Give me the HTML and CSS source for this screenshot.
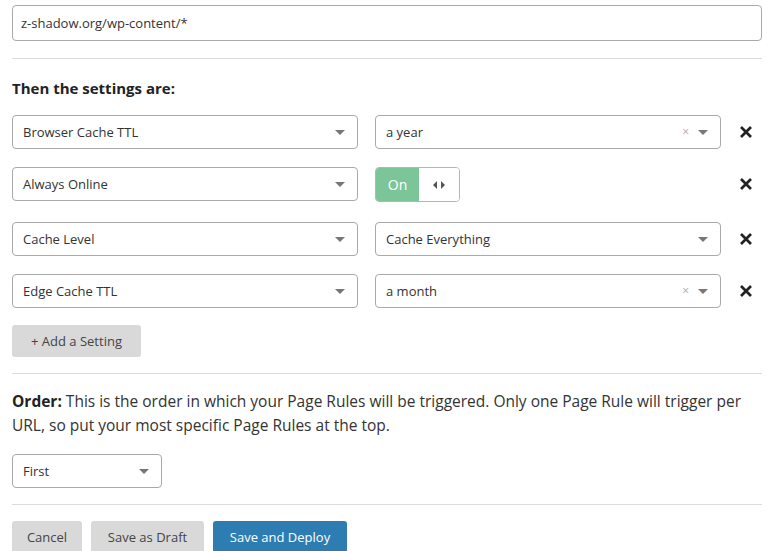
FILE: index.html
```html
<!DOCTYPE html>
<html>
<head>
<meta charset="utf-8">
<link rel="stylesheet" href="styles.css">
</head>
<body>
<div class="page">
  <div class="url-input">z-shadow.org/wp-content/*</div>
  <hr class="rule rule-top">
  <h3 class="heading">Then the settings are:</h3>

  <div class="settings">
    <div class="row">
      <div class="select"><span>Browser Cache TTL</span><span class="caret"></span></div>
      <div class="select"><span>a year</span><span class="controls"><span class="clear">×</span><span class="caret"></span></span></div>
      <span class="remove"><svg width="14" height="14" viewBox="0 0 14 14"><path d="M2 2L12 12M12 2L2 12" stroke="#222" stroke-width="2.7"/></svg></span>
    </div>
    <div class="row row-toggle">
      <div class="select"><span>Always Online</span><span class="caret"></span></div>
      <div class="value-cell">
        <div class="toggle"><span class="toggle-on">On</span><span class="toggle-handle"><svg width="12" height="8" viewBox="0 0 12 8"><path d="M4 0L0 4L4 8Z M8 0L12 4L8 8Z" fill="#555"/></svg></span></div>
      </div>
      <span class="remove"><svg width="14" height="14" viewBox="0 0 14 14"><path d="M2 2L12 12M12 2L2 12" stroke="#222" stroke-width="2.7"/></svg></span>
    </div>
    <div class="row">
      <div class="select"><span>Cache Level</span><span class="caret"></span></div>
      <div class="select"><span>Cache Everything</span><span class="caret"></span></div>
      <span class="remove"><svg width="14" height="14" viewBox="0 0 14 14"><path d="M2 2L12 12M12 2L2 12" stroke="#222" stroke-width="2.7"/></svg></span>
    </div>
    <div class="row">
      <div class="select"><span>Edge Cache TTL</span><span class="caret"></span></div>
      <div class="select"><span>a month</span><span class="controls"><span class="clear">×</span><span class="caret"></span></span></div>
      <span class="remove"><svg width="14" height="14" viewBox="0 0 14 14"><path d="M2 2L12 12M12 2L2 12" stroke="#222" stroke-width="2.7"/></svg></span>
    </div>
  </div>

  <button class="btn btn-gray add-btn">+ Add a Setting</button>
  <hr class="rule rule-mid">

  <p class="order"><b>Order:</b> This is the order in which your Page Rules will be triggered. Only one Page Rule will trigger per URL, so put your most specific Page Rules at the top.</p>

  <div class="select select-small"><span>First</span><span class="caret"></span></div>
  <hr class="rule rule-bottom">

  <div class="actions">
    <button class="btn btn-gray btn-cancel">Cancel</button>
    <button class="btn btn-gray btn-draft">Save as Draft</button>
    <button class="btn btn-blue btn-deploy">Save and Deploy</button>
  </div>
</div>
</body>
</html>
```

FILE: styles.css
```css
* { box-sizing: border-box; }
html, body { margin: 0; padding: 0; background: #fff; }
body {
  font-family: "Open Sans", "Noto Sans", sans-serif;
  color: #333;
  font-size: 13px;
}
.page {
  width: 775px;
  padding: 5px 13px 0 12px;
}
.url-input {
  height: 36px;
  border: 1px solid #a9a9a9;
  border-radius: 4px;
  padding: 0 8px;
  display: flex;
  align-items: center;
  color: #333;
}
.rule {
  border: 0;
  border-top: 1px solid #dcdcdc;
  margin: 0;
}
.rule-top { margin-top: 17px; }
.heading {
  font-size: 15px;
  font-weight: 700;
  color: #222;
  margin: 18px 0 0;
  line-height: 22px;
}
.settings {
  margin-top: 16px;
  display: flex;
  flex-direction: column;
  gap: 18px;
}
.row {
  display: flex;
  align-items: center;
  gap: 17px;
  height: 34px;
}
.row-toggle { margin-bottom: 3px; }
.select {
  width: 346px;
  height: 34px;
  border: 1px solid #a9a9a9;
  border-radius: 4px;
  padding: 0 12px 0 10px;
  display: flex;
  align-items: center;
  justify-content: space-between;
  color: #333;
}
.value-cell { width: 346px; height: 34px; }
.caret {
  width: 0; height: 0;
  border-left: 5px solid transparent;
  border-right: 5px solid transparent;
  border-top: 5px solid #777;
  display: inline-block;
}
.controls { display: flex; align-items: center; gap: 9px; }
.clear { color: #aaa; font-size: 12px; line-height: 1; }
.remove {
  display: flex;
  align-items: center;
  padding-left: 1px;
  width: 24px;
}
.toggle {
  width: 85px;
  height: 35px;
  border: 1px solid #b5b5b5;
  border-radius: 4px;
  display: flex;
  overflow: hidden;
}
.toggle-on {
  width: 43px;
  background: #7cc598;
  color: #fff;
  display: flex;
  align-items: center;
  justify-content: center;
  font-size: 14px;
}
.toggle-handle {
  flex: 1;
  display: flex;
  align-items: center;
  justify-content: center;
  background: #fff;
}
.btn {
  font-family: inherit;
  font-size: 13px;
  border: 0;
  border-radius: 3px;
  height: 32px;
  padding: 0;
  cursor: pointer;
}
.btn-gray { background: #d9d9d9; color: #444; }
.btn-blue { background: #2d7db3; color: #fff; }
.add-btn { margin-top: 17px; display: block; width: 129px; }
.rule-mid { margin-top: 16px; }
.order {
  margin: 15px 0 0;
  max-width: 735px;
  font-size: 15.5px;
  line-height: 24px;
  color: #333;
}
.order b { color: #222; }
.select-small { width: 150px; margin-top: 17px; }
.rule-bottom { margin-top: 16px; }
.actions {
  margin-top: 16px;
  display: flex;
  gap: 9px;
}
.btn-cancel { width: 70px; }
.btn-draft { width: 113px; }
.btn-deploy { width: 134px; }
```
